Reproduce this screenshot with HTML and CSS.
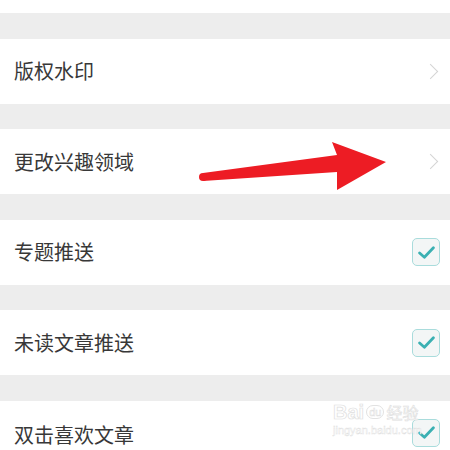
FILE: index.html
```html
<!DOCTYPE html>
<html lang="zh-CN">
<head>
<meta charset="utf-8">
<link rel="stylesheet" href="styles.css">
</head>
<body>
<div class="page">
  <div class="top"></div>
  <div class="gap"></div>
  <div class="row"><span class="label">版权水印</span><span class="chev"></span></div>
  <div class="gap"></div>
  <div class="row"><span class="label">更改兴趣领域</span><span class="chev"></span></div>
  <div class="gap"></div>
  <div class="row"><span class="label">专题推送</span><span class="check"><svg width="17" height="13" viewBox="0 0 16 12"><path d="M1.5 6.5 L6 10.5 L14.5 1.5" fill="none" stroke="#3bb0b2" stroke-width="2.6" stroke-linecap="round" stroke-linejoin="round"/></svg></span></div>
  <div class="gap"></div>
  <div class="row"><span class="label">未读文章推送</span><span class="check"><svg width="17" height="13" viewBox="0 0 16 12"><path d="M1.5 6.5 L6 10.5 L14.5 1.5" fill="none" stroke="#3bb0b2" stroke-width="2.6" stroke-linecap="round" stroke-linejoin="round"/></svg></span></div>
  <div class="gap"></div>
  <div class="row last"><span class="label">双击喜欢文章</span><span class="check"><svg width="17" height="13" viewBox="0 0 16 12"><path d="M1.5 6.5 L6 10.5 L14.5 1.5" fill="none" stroke="#3bb0b2" stroke-width="2.6" stroke-linecap="round" stroke-linejoin="round"/></svg></span></div>

  <svg class="arrow" width="450" height="450" viewBox="0 0 450 450">
    <polygon points="203,173 337,155 332,142 386,162 337,190 337,172 203,181" fill="#ed1c24"/>
    <circle cx="203" cy="177" r="4" fill="#ed1c24"/>
  </svg>

  <div class="wm">
    <div class="wm-top"><span class="wm-bai">Bai</span><span class="wm-du">du</span><span class="wm-jy">经验</span></div>
    <div class="wm-url">jingyan.baidu.com</div>
  </div>
</div>
</body>
</html>
```

FILE: styles.css
```css
html, body {
  margin: 0;
  padding: 0;
  background: #ffffff;
}
.page {
  position: relative;
  width: 450px;
  height: 450px;
  overflow: hidden;
  font-family: "Noto Sans CJK SC", "Noto Sans", sans-serif;
  background: #ffffff;
}
.top {
  height: 13px;
  background: #ffffff;
}
.gap {
  height: 25.5px;
  background: #ededed;
}
.row {
  height: 65px;
  background: #ffffff;
  display: flex;
  align-items: center;
  justify-content: space-between;
  padding: 0 10px 0 14px;
}
.row.last {
  height: 60px;
  align-items: flex-start;
  padding-top: 18px;
  box-sizing: border-box;
}
.label {
  font-size: 20px;
  line-height: 26px;
  color: #383838;
  letter-spacing: 0;
}
.row.last .label {
  margin-top: 3px;
}
.chev {
  width: 10px;
  height: 10px;
  border-top: 1px solid #d4d4d4;
  border-right: 1px solid #d4d4d4;
  transform: rotate(45deg);
  margin-right: 4px;
}
.check {
  width: 26px;
  height: 26px;
  border: 1px solid #a9dcdc;
  border-radius: 5px;
  background: #f3f6f6;
  display: flex;
  align-items: center;
  justify-content: center;
}
.arrow {
  position: absolute;
  left: 0;
  top: 0;
  pointer-events: none;
}
.wm {
  position: absolute;
  left: 333px;
  top: 400px;
  pointer-events: none;
}
.wm-top {
  display: flex;
  align-items: center;
  gap: 2px;
}
.wm-bai {
  font-family: "Liberation Sans", sans-serif;
  font-size: 20px;
  font-weight: bold;
  color: #fff;
  -webkit-text-stroke: 0.7px #dedede;
}
.wm-du {
  font-family: "Liberation Sans", sans-serif;
  font-size: 11px;
  color: #fff;
  -webkit-text-stroke: 0.5px #dedede;
  border: 1px solid #e2e2e2;
  border-radius: 8px;
  padding: 0 2px;
}
.wm-jy {
  font-size: 16px;
  color: #fff;
  -webkit-text-stroke: 0.6px #dedede;
}
.wm-url {
  font-family: "Liberation Sans", sans-serif;
  font-size: 11px;
  color: #fff;
  -webkit-text-stroke: 0.4px #dedede;
  margin-top: 0;
}
```
